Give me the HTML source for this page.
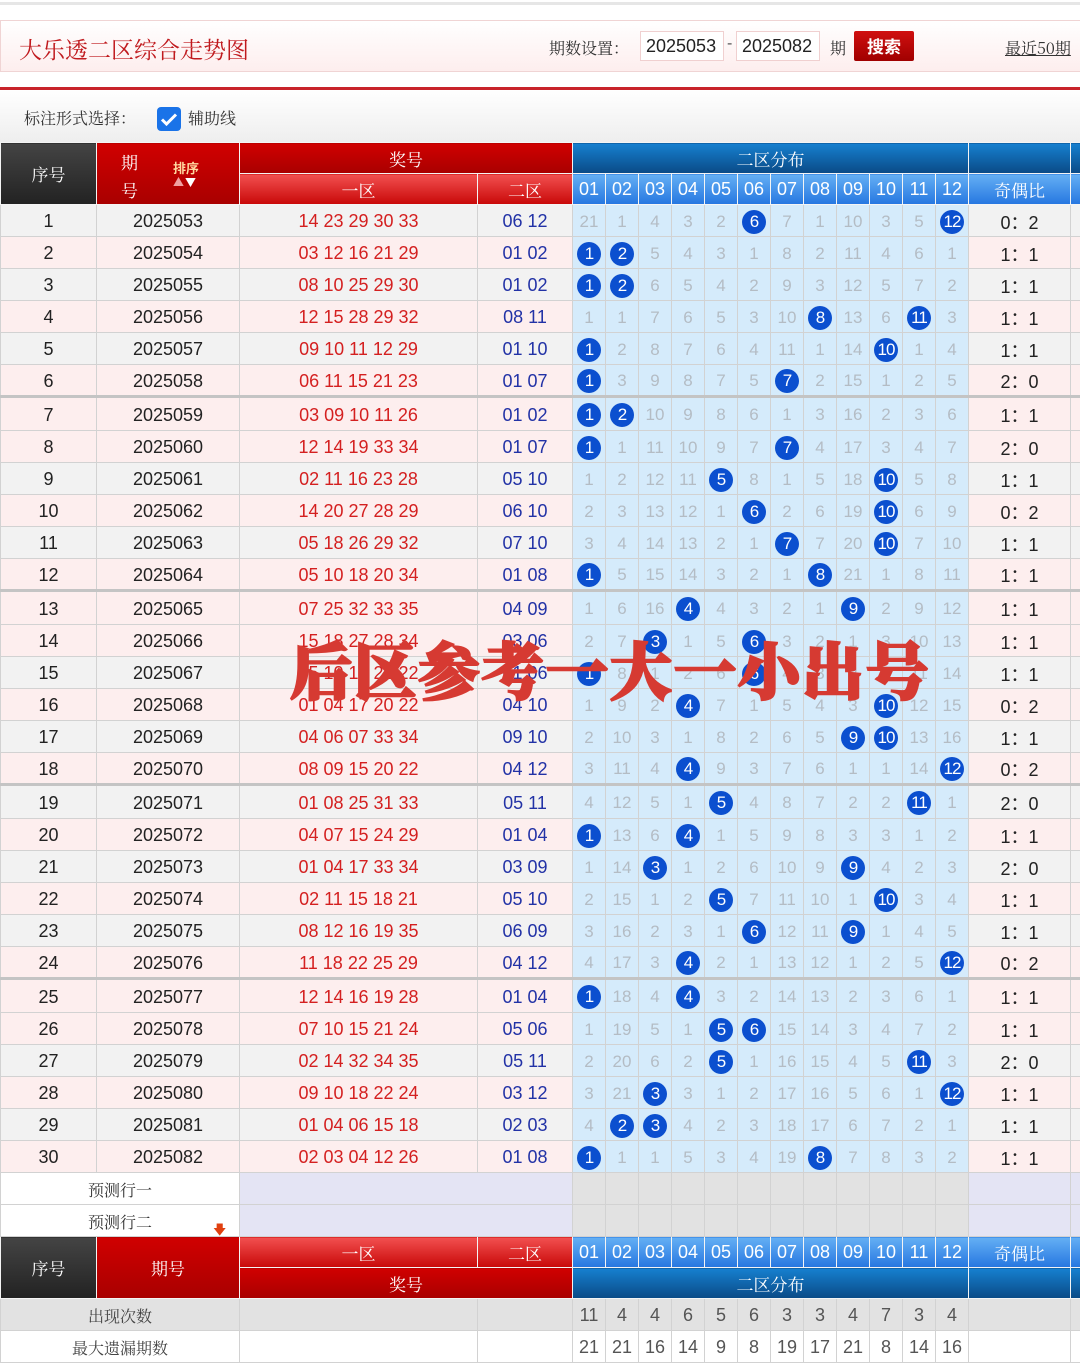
<!DOCTYPE html>
<html><head><meta charset="utf-8">
<style>
*{margin:0;padding:0;box-sizing:border-box}
body{width:1080px;height:1362px;overflow:hidden;background:#fff;font-family:"Liberation Sans","Noto Sans CJK SC",sans-serif;position:relative}
.topline{position:absolute;top:2px;left:0;width:1080px;height:3px;background:#e6e6e6}
.hdr{position:absolute;top:20px;left:0;width:1090px;height:52px;border:1px solid #f0d4d4;background:linear-gradient(#fff,#fdeeee)}
.title{position:absolute;left:18px;top:11px;font:23px "Noto Serif CJK SC",serif;color:#c01a1e}
.qs{position:absolute;left:548px;top:15px;font:16px "Noto Serif CJK SC",serif;color:#333}
.inp{position:absolute;top:10px;height:30px;width:84px;border:1px solid #f0d0d0;background:#fff;font:18px "Liberation Sans",sans-serif;color:#222;padding:4px 5px}
.dash{position:absolute;left:726px;top:14px;font-size:16px;color:#555}
.qi{position:absolute;left:829px;top:15px;font:16px "Noto Serif CJK SC",serif;color:#333}
.btn{position:absolute;left:853px;top:10px;width:60px;height:30px;background:linear-gradient(#d01010,#a00000);border-radius:2px;color:#fff;font:bold 17px "Noto Sans CJK SC",sans-serif;text-align:center;line-height:30px}
.recent{position:absolute;left:1004px;top:15px;font:16px "Noto Serif CJK SC",serif;color:#333;text-decoration:underline;white-space:nowrap}
.redline{position:absolute;top:87px;left:0;width:1080px;height:3px;background:#c8232a}
.opt{position:absolute;top:90px;left:0;width:1080px;height:52px;background:linear-gradient(#fff,#eee)}
.opt .l{position:absolute;left:24px;top:16px;font:16px "Noto Serif CJK SC",serif;color:#333}
.cb{position:absolute;left:157px;top:17px;width:24px;height:24px;background:#1a73e8;border-radius:4px}
.opt .r{position:absolute;left:188px;top:16px;font:16px "Noto Serif CJK SC",serif;color:#333}
table{position:absolute;left:0;top:142px;border-collapse:collapse;table-layout:fixed;width:1110px}
td{text-align:center;border:1px solid #d2d2d2;font-size:18px;color:#222;overflow:hidden;white-space:nowrap;padding:2px 0 0 0}
tr.r td{height:32px}
tr.s td{height:34px;border-top:3px solid #c4c4c4}
tr.g td{background:#f2f2f2}
tr.p td{background:#fdeeee}
td.z1{color:#d42020}
td.z2{color:#2232a6}
tr td.m{background:#d5ebfb;color:#b4bcc4;font-size:17px}
td.m b{display:inline-block;width:24px;height:24px;border-radius:50%;background:#0b4fcf;color:#fff;font-weight:normal;font-size:17px;line-height:24px;letter-spacing:-1px}
.h td{color:#fff;font:17px "Noto Serif CJK SC",serif;border:1px solid #f4f4f4;height:31px;padding:0}
.dk{background:linear-gradient(#444,#222)}
.rd{background:linear-gradient(#d00000,#a80000)}
.lr{background:linear-gradient(#f25050,#c80808)}
.db{background:linear-gradient(#1680d0,#0a4a86)}
.lb{background:linear-gradient(#64b0f4,#2676e0)}
.h td.n{font:18px "Liberation Sans",sans-serif}
.pr td{height:32px;font:16px "Noto Serif CJK SC",serif;color:#333;background:#fff}
.pr td.lv{background:#e4e4f4}
.pr td.gy{background:#e2e2e2}
.ft td{height:32px;font-size:18px;color:#555}
.ft1 td{background:#e2e2e2}
.ft td.t{font:16px "Noto Serif CJK SC",serif;color:#444}
.ov{position:absolute;left:290px;top:628px;font:900 62px "Noto Serif CJK SC",serif;color:#d63a32;-webkit-text-stroke:2.5px #d63a32;letter-spacing:2px;white-space:nowrap;line-height:80px}
</style></head><body>
<div class="topline"></div>
<div class="hdr">
<div class="title">大乐透二区综合走势图</div>
<div class="qs">期数设置：</div>
<div class="inp" style="left:639px">2025053</div>
<div class="dash">-</div>
<div class="inp" style="left:735px">2025082</div>
<div class="qi">期</div>
<div class="btn">搜索</div>
<div class="recent">最近50期</div>
</div>
<div class="redline"></div>
<div class="opt"><div class="l">标注形式选择：</div>
<div class="cb"><svg width="24" height="24" viewBox="0 0 24 24"><path d="M5 12.5l4.5 4.5L19 7.5" stroke="#fff" stroke-width="3" fill="none"/></svg></div>
<div class="r">辅助线</div></div>

<table>
<colgroup><col style="width:96px"><col style="width:143px"><col style="width:238px"><col style="width:95px">
<col style="width:33px"><col style="width:33px"><col style="width:33px"><col style="width:33px"><col style="width:33px"><col style="width:33px"><col style="width:33px"><col style="width:33px"><col style="width:33px"><col style="width:33px"><col style="width:33px"><col style="width:33px">
<col style="width:102px"><col style="width:40px"></colgroup>
<tr class="h"><td class="dk" rowspan="2">序号</td><td class="rd" rowspan="2" style="position:relative"><span style="position:absolute;left:24px;top:6px">期</span><span style="position:absolute;left:24px;top:34px">号</span><span style="position:absolute;left:76px;top:15px;font:bold 13px 'Noto Sans CJK SC',sans-serif;color:#ffd8a0">排序</span><span style="position:absolute;left:76px;top:31px;font-size:11px;color:#f0a0a0">▲</span><span style="position:absolute;left:88px;top:31px;font-size:11px;color:#fff">▼</span></td><td class="rd" colspan="2">奖号</td><td class="db" colspan="12">二区分布</td><td class="db"></td><td class="db"></td></tr>
<tr class="h"><td class="lr">一区</td><td class="lr">二区</td><td class="lb n">01</td><td class="lb n">02</td><td class="lb n">03</td><td class="lb n">04</td><td class="lb n">05</td><td class="lb n">06</td><td class="lb n">07</td><td class="lb n">08</td><td class="lb n">09</td><td class="lb n">10</td><td class="lb n">11</td><td class="lb n">12</td><td class="lb">奇偶比</td><td class="lb"></td></tr>
<tr class="r g"><td>1</td><td>2025053</td><td class="z1">14 23 29 30 33</td><td class="z2">06 12</td><td class="m">21</td><td class="m">1</td><td class="m">4</td><td class="m">3</td><td class="m">2</td><td class="m"><b>6</b></td><td class="m">7</td><td class="m">1</td><td class="m">10</td><td class="m">3</td><td class="m">5</td><td class="m"><b>12</b></td><td>0：2</td><td></td></tr>
<tr class="r p"><td>2</td><td>2025054</td><td class="z1">03 12 16 21 29</td><td class="z2">01 02</td><td class="m"><b>1</b></td><td class="m"><b>2</b></td><td class="m">5</td><td class="m">4</td><td class="m">3</td><td class="m">1</td><td class="m">8</td><td class="m">2</td><td class="m">11</td><td class="m">4</td><td class="m">6</td><td class="m">1</td><td>1：1</td><td></td></tr>
<tr class="r g"><td>3</td><td>2025055</td><td class="z1">08 10 25 29 30</td><td class="z2">01 02</td><td class="m"><b>1</b></td><td class="m"><b>2</b></td><td class="m">6</td><td class="m">5</td><td class="m">4</td><td class="m">2</td><td class="m">9</td><td class="m">3</td><td class="m">12</td><td class="m">5</td><td class="m">7</td><td class="m">2</td><td>1：1</td><td></td></tr>
<tr class="r p"><td>4</td><td>2025056</td><td class="z1">12 15 28 29 32</td><td class="z2">08 11</td><td class="m">1</td><td class="m">1</td><td class="m">7</td><td class="m">6</td><td class="m">5</td><td class="m">3</td><td class="m">10</td><td class="m"><b>8</b></td><td class="m">13</td><td class="m">6</td><td class="m"><b>11</b></td><td class="m">3</td><td>1：1</td><td></td></tr>
<tr class="r g"><td>5</td><td>2025057</td><td class="z1">09 10 11 12 29</td><td class="z2">01 10</td><td class="m"><b>1</b></td><td class="m">2</td><td class="m">8</td><td class="m">7</td><td class="m">6</td><td class="m">4</td><td class="m">11</td><td class="m">1</td><td class="m">14</td><td class="m"><b>10</b></td><td class="m">1</td><td class="m">4</td><td>1：1</td><td></td></tr>
<tr class="r p"><td>6</td><td>2025058</td><td class="z1">06 11 15 21 23</td><td class="z2">01 07</td><td class="m"><b>1</b></td><td class="m">3</td><td class="m">9</td><td class="m">8</td><td class="m">7</td><td class="m">5</td><td class="m"><b>7</b></td><td class="m">2</td><td class="m">15</td><td class="m">1</td><td class="m">2</td><td class="m">5</td><td>2：0</td><td></td></tr>
<tr class="s p"><td>7</td><td>2025059</td><td class="z1">03 09 10 11 26</td><td class="z2">01 02</td><td class="m"><b>1</b></td><td class="m"><b>2</b></td><td class="m">10</td><td class="m">9</td><td class="m">8</td><td class="m">6</td><td class="m">1</td><td class="m">3</td><td class="m">16</td><td class="m">2</td><td class="m">3</td><td class="m">6</td><td>1：1</td><td></td></tr>
<tr class="r p"><td>8</td><td>2025060</td><td class="z1">12 14 19 33 34</td><td class="z2">01 07</td><td class="m"><b>1</b></td><td class="m">1</td><td class="m">11</td><td class="m">10</td><td class="m">9</td><td class="m">7</td><td class="m"><b>7</b></td><td class="m">4</td><td class="m">17</td><td class="m">3</td><td class="m">4</td><td class="m">7</td><td>2：0</td><td></td></tr>
<tr class="r g"><td>9</td><td>2025061</td><td class="z1">02 11 16 23 28</td><td class="z2">05 10</td><td class="m">1</td><td class="m">2</td><td class="m">12</td><td class="m">11</td><td class="m"><b>5</b></td><td class="m">8</td><td class="m">1</td><td class="m">5</td><td class="m">18</td><td class="m"><b>10</b></td><td class="m">5</td><td class="m">8</td><td>1：1</td><td></td></tr>
<tr class="r p"><td>10</td><td>2025062</td><td class="z1">14 20 27 28 29</td><td class="z2">06 10</td><td class="m">2</td><td class="m">3</td><td class="m">13</td><td class="m">12</td><td class="m">1</td><td class="m"><b>6</b></td><td class="m">2</td><td class="m">6</td><td class="m">19</td><td class="m"><b>10</b></td><td class="m">6</td><td class="m">9</td><td>0：2</td><td></td></tr>
<tr class="r g"><td>11</td><td>2025063</td><td class="z1">05 18 26 29 32</td><td class="z2">07 10</td><td class="m">3</td><td class="m">4</td><td class="m">14</td><td class="m">13</td><td class="m">2</td><td class="m">1</td><td class="m"><b>7</b></td><td class="m">7</td><td class="m">20</td><td class="m"><b>10</b></td><td class="m">7</td><td class="m">10</td><td>1：1</td><td></td></tr>
<tr class="r p"><td>12</td><td>2025064</td><td class="z1">05 10 18 20 34</td><td class="z2">01 08</td><td class="m"><b>1</b></td><td class="m">5</td><td class="m">15</td><td class="m">14</td><td class="m">3</td><td class="m">2</td><td class="m">1</td><td class="m"><b>8</b></td><td class="m">21</td><td class="m">1</td><td class="m">8</td><td class="m">11</td><td>1：1</td><td></td></tr>
<tr class="s p"><td>13</td><td>2025065</td><td class="z1">07 25 32 33 35</td><td class="z2">04 09</td><td class="m">1</td><td class="m">6</td><td class="m">16</td><td class="m"><b>4</b></td><td class="m">4</td><td class="m">3</td><td class="m">2</td><td class="m">1</td><td class="m"><b>9</b></td><td class="m">2</td><td class="m">9</td><td class="m">12</td><td>1：1</td><td></td></tr>
<tr class="r p"><td>14</td><td>2025066</td><td class="z1">15 18 27 28 34</td><td class="z2">03 06</td><td class="m">2</td><td class="m">7</td><td class="m"><b>3</b></td><td class="m">1</td><td class="m">5</td><td class="m"><b>6</b></td><td class="m">3</td><td class="m">2</td><td class="m">1</td><td class="m">3</td><td class="m">10</td><td class="m">13</td><td>1：1</td><td></td></tr>
<tr class="r g"><td>15</td><td>2025067</td><td class="z1">05 10 12 21 22</td><td class="z2">01 06</td><td class="m"><b>1</b></td><td class="m">8</td><td class="m">1</td><td class="m">2</td><td class="m">6</td><td class="m"><b>6</b></td><td class="m">4</td><td class="m">3</td><td class="m">2</td><td class="m">4</td><td class="m">11</td><td class="m">14</td><td>1：1</td><td></td></tr>
<tr class="r p"><td>16</td><td>2025068</td><td class="z1">01 04 17 20 22</td><td class="z2">04 10</td><td class="m">1</td><td class="m">9</td><td class="m">2</td><td class="m"><b>4</b></td><td class="m">7</td><td class="m">1</td><td class="m">5</td><td class="m">4</td><td class="m">3</td><td class="m"><b>10</b></td><td class="m">12</td><td class="m">15</td><td>0：2</td><td></td></tr>
<tr class="r g"><td>17</td><td>2025069</td><td class="z1">04 06 07 33 34</td><td class="z2">09 10</td><td class="m">2</td><td class="m">10</td><td class="m">3</td><td class="m">1</td><td class="m">8</td><td class="m">2</td><td class="m">6</td><td class="m">5</td><td class="m"><b>9</b></td><td class="m"><b>10</b></td><td class="m">13</td><td class="m">16</td><td>1：1</td><td></td></tr>
<tr class="r p"><td>18</td><td>2025070</td><td class="z1">08 09 15 20 22</td><td class="z2">04 12</td><td class="m">3</td><td class="m">11</td><td class="m">4</td><td class="m"><b>4</b></td><td class="m">9</td><td class="m">3</td><td class="m">7</td><td class="m">6</td><td class="m">1</td><td class="m">1</td><td class="m">14</td><td class="m"><b>12</b></td><td>0：2</td><td></td></tr>
<tr class="s g"><td>19</td><td>2025071</td><td class="z1">01 08 25 31 33</td><td class="z2">05 11</td><td class="m">4</td><td class="m">12</td><td class="m">5</td><td class="m">1</td><td class="m"><b>5</b></td><td class="m">4</td><td class="m">8</td><td class="m">7</td><td class="m">2</td><td class="m">2</td><td class="m"><b>11</b></td><td class="m">1</td><td>2：0</td><td></td></tr>
<tr class="r p"><td>20</td><td>2025072</td><td class="z1">04 07 15 24 29</td><td class="z2">01 04</td><td class="m"><b>1</b></td><td class="m">13</td><td class="m">6</td><td class="m"><b>4</b></td><td class="m">1</td><td class="m">5</td><td class="m">9</td><td class="m">8</td><td class="m">3</td><td class="m">3</td><td class="m">1</td><td class="m">2</td><td>1：1</td><td></td></tr>
<tr class="r g"><td>21</td><td>2025073</td><td class="z1">01 04 17 33 34</td><td class="z2">03 09</td><td class="m">1</td><td class="m">14</td><td class="m"><b>3</b></td><td class="m">1</td><td class="m">2</td><td class="m">6</td><td class="m">10</td><td class="m">9</td><td class="m"><b>9</b></td><td class="m">4</td><td class="m">2</td><td class="m">3</td><td>2：0</td><td></td></tr>
<tr class="r p"><td>22</td><td>2025074</td><td class="z1">02 11 15 18 21</td><td class="z2">05 10</td><td class="m">2</td><td class="m">15</td><td class="m">1</td><td class="m">2</td><td class="m"><b>5</b></td><td class="m">7</td><td class="m">11</td><td class="m">10</td><td class="m">1</td><td class="m"><b>10</b></td><td class="m">3</td><td class="m">4</td><td>1：1</td><td></td></tr>
<tr class="r g"><td>23</td><td>2025075</td><td class="z1">08 12 16 19 35</td><td class="z2">06 09</td><td class="m">3</td><td class="m">16</td><td class="m">2</td><td class="m">3</td><td class="m">1</td><td class="m"><b>6</b></td><td class="m">12</td><td class="m">11</td><td class="m"><b>9</b></td><td class="m">1</td><td class="m">4</td><td class="m">5</td><td>1：1</td><td></td></tr>
<tr class="r p"><td>24</td><td>2025076</td><td class="z1">11 18 22 25 29</td><td class="z2">04 12</td><td class="m">4</td><td class="m">17</td><td class="m">3</td><td class="m"><b>4</b></td><td class="m">2</td><td class="m">1</td><td class="m">13</td><td class="m">12</td><td class="m">1</td><td class="m">2</td><td class="m">5</td><td class="m"><b>12</b></td><td>0：2</td><td></td></tr>
<tr class="s p"><td>25</td><td>2025077</td><td class="z1">12 14 16 19 28</td><td class="z2">01 04</td><td class="m"><b>1</b></td><td class="m">18</td><td class="m">4</td><td class="m"><b>4</b></td><td class="m">3</td><td class="m">2</td><td class="m">14</td><td class="m">13</td><td class="m">2</td><td class="m">3</td><td class="m">6</td><td class="m">1</td><td>1：1</td><td></td></tr>
<tr class="r p"><td>26</td><td>2025078</td><td class="z1">07 10 15 21 24</td><td class="z2">05 06</td><td class="m">1</td><td class="m">19</td><td class="m">5</td><td class="m">1</td><td class="m"><b>5</b></td><td class="m"><b>6</b></td><td class="m">15</td><td class="m">14</td><td class="m">3</td><td class="m">4</td><td class="m">7</td><td class="m">2</td><td>1：1</td><td></td></tr>
<tr class="r g"><td>27</td><td>2025079</td><td class="z1">02 14 32 34 35</td><td class="z2">05 11</td><td class="m">2</td><td class="m">20</td><td class="m">6</td><td class="m">2</td><td class="m"><b>5</b></td><td class="m">1</td><td class="m">16</td><td class="m">15</td><td class="m">4</td><td class="m">5</td><td class="m"><b>11</b></td><td class="m">3</td><td>2：0</td><td></td></tr>
<tr class="r p"><td>28</td><td>2025080</td><td class="z1">09 10 18 22 24</td><td class="z2">03 12</td><td class="m">3</td><td class="m">21</td><td class="m"><b>3</b></td><td class="m">3</td><td class="m">1</td><td class="m">2</td><td class="m">17</td><td class="m">16</td><td class="m">5</td><td class="m">6</td><td class="m">1</td><td class="m"><b>12</b></td><td>1：1</td><td></td></tr>
<tr class="r g"><td>29</td><td>2025081</td><td class="z1">01 04 06 15 18</td><td class="z2">02 03</td><td class="m">4</td><td class="m"><b>2</b></td><td class="m"><b>3</b></td><td class="m">4</td><td class="m">2</td><td class="m">3</td><td class="m">18</td><td class="m">17</td><td class="m">6</td><td class="m">7</td><td class="m">2</td><td class="m">1</td><td>1：1</td><td></td></tr>
<tr class="r p"><td>30</td><td>2025082</td><td class="z1">02 03 04 12 26</td><td class="z2">01 08</td><td class="m"><b>1</b></td><td class="m">1</td><td class="m">1</td><td class="m">5</td><td class="m">3</td><td class="m">4</td><td class="m">19</td><td class="m"><b>8</b></td><td class="m">7</td><td class="m">8</td><td class="m">3</td><td class="m">2</td><td>1：1</td><td></td></tr>
<tr class="pr"><td colspan="2">预测行一</td><td class="lv" colspan="2"></td><td class="gy"></td><td class="gy"></td><td class="gy"></td><td class="gy"></td><td class="gy"></td><td class="gy"></td><td class="gy"></td><td class="gy"></td><td class="gy"></td><td class="gy"></td><td class="gy"></td><td class="gy"></td><td class="lv"></td><td class="lv"></td></tr>
<tr class="pr"><td colspan="2" style="position:relative">预测行二<span style="position:absolute;left:212px;top:14px;color:#e04010;font-size:13px">🡇</span></td><td class="lv" colspan="2"></td><td class="gy"></td><td class="gy"></td><td class="gy"></td><td class="gy"></td><td class="gy"></td><td class="gy"></td><td class="gy"></td><td class="gy"></td><td class="gy"></td><td class="gy"></td><td class="gy"></td><td class="gy"></td><td class="lv"></td><td class="lv"></td></tr>
<tr class="h"><td class="dk" rowspan="2">序号</td><td class="rd" rowspan="2">期号</td><td class="lr">一区</td><td class="lr">二区</td><td class="lb n">01</td><td class="lb n">02</td><td class="lb n">03</td><td class="lb n">04</td><td class="lb n">05</td><td class="lb n">06</td><td class="lb n">07</td><td class="lb n">08</td><td class="lb n">09</td><td class="lb n">10</td><td class="lb n">11</td><td class="lb n">12</td><td class="lb">奇偶比</td><td class="lb"></td></tr>
<tr class="h"><td class="rd" colspan="2">奖号</td><td class="db" colspan="12">二区分布</td><td class="db"></td><td class="db"></td></tr>
<tr class="ft ft1"><td class="t" colspan="2">出现次数</td><td></td><td></td><td>11</td><td>4</td><td>4</td><td>6</td><td>5</td><td>6</td><td>3</td><td>3</td><td>4</td><td>7</td><td>3</td><td>4</td><td></td><td></td></tr>
<tr class="ft"><td class="t" colspan="2">最大遗漏期数</td><td></td><td></td><td>21</td><td>21</td><td>16</td><td>14</td><td>9</td><td>8</td><td>19</td><td>17</td><td>21</td><td>8</td><td>14</td><td>16</td><td></td><td></td></tr>
</table>
<div class="ov">后区参考一大一小出号</div>
</body></html>
